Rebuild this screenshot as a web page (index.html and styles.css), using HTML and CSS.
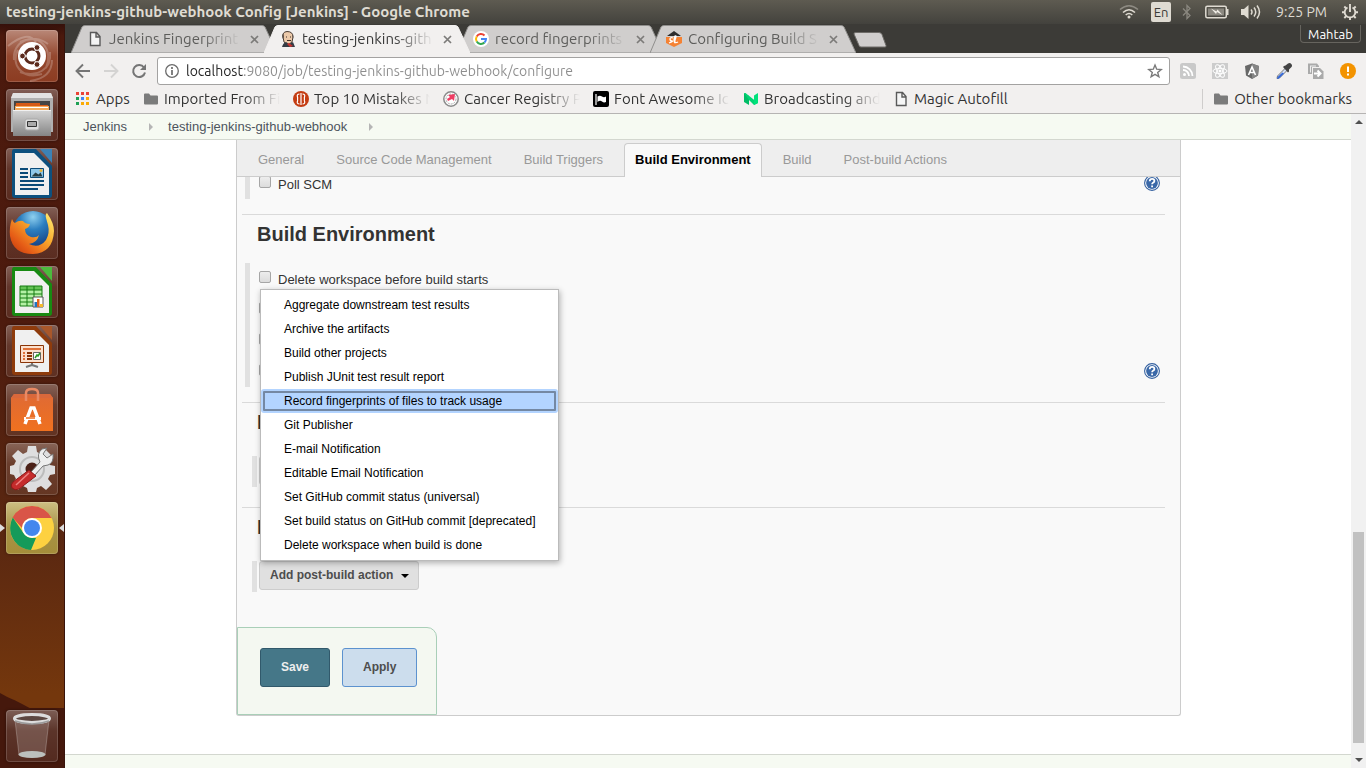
FILE: index.html
```html
<!DOCTYPE html>
<html lang="en">
<head>
<meta charset="utf-8">
<title>testing-jenkins-github-webhook Config [Jenkins]</title>
<link rel="stylesheet" href="styles.css">
</head>
<body>
<header class="topbar">
  <div class="topbar-title">testing-jenkins-github-webhook Config [Jenkins] - Google Chrome</div>
  <div class="indicators">
    <svg class="ind-wifi" width="20" height="16" viewBox="0 0 20 16" fill="none" stroke-width="1.6"><path d="M1 5.500Q10-2 19 5.500" stroke="#8d8a82"/><path d="M4 8.500Q10 3 16 8.500M6.700 11Q10 8 13.300 11" stroke="#dfdbd2"/><circle cx="10" cy="13" r="1.500" fill="#dfdbd2"/></svg>
    <span class="ind-lang">En</span>
    <svg class="ind-bt" width="10" height="16" viewBox="0 0 10 16" fill="none" stroke="#8b8880" stroke-width="1.300"><path d="M1 4.500l7 7L5 14.500v-13L8 4.500l-7 7"/></svg>
    <svg class="ind-battery" width="24" height="14" viewBox="0 0 24 14"><rect x=".8" y="1.300" width="20.500" height="11.400" rx="1.500" fill="none" stroke="#dfdbd2" stroke-width="1.500"/><path d="M3 3.500h16v7H3z" fill="#8b8880"/><path d="M22 4h1.500v6H22z" fill="#dfdbd2"/><path d="M6 3.500l5.500 3 1-2 5 5.500-5.500-3-1 2z" fill="#f0ede5"/></svg>
    <svg class="ind-sound" width="20" height="16" viewBox="0 0 20 16"><path d="M0 5h3l4.500-4v14L3 11H0z" fill="#dfdbd2"/><path d="M10 5.500q2 2.500 0 5M13 3.500q3.500 4.500 0 9M16 1.500q5 6.500 0 13" fill="none" stroke="#dfdbd2" stroke-width="1.500"/></svg>
    <span class="ind-time">9:25 PM</span>
    <svg width="16" height="16" viewBox="0 0 16 16" fill="none" stroke="#dfdbd2"><path d="M5.500 3.500a5.300 5.300 0 1 0 5 0" stroke-width="1.800"/><path d="M8 0v8M0 8.300h3M13 8.300h3M2.300 14l2-2M13.700 14l-2-2M2.300 2.500l2 2M13.700 2.500l-2 2M8 13v3" stroke-width="1.900"/></svg>
  </div>
</header>

<div class="desktop">
  <nav class="launcher" aria-label="Launcher">
    <svg class="launcher-hill" viewBox="0 0 65 78" preserveAspectRatio="none"><path d="M0 3Q7 7 12 9T30 18H65V78H0z" fill="#45180c"/></svg>
    <button class="tile tile-dash" aria-label="Dash">
      <svg viewBox="0 0 52 52"><g fill="none" stroke="#fff" stroke-opacity=".22" stroke-width="2"><path d="M8 30C6 12 26 2 42 14M14 12C34 2 48 20 40 38M44 22c2 18-14 26-30 20M36 44C16 50 4 34 12 20M2 16Q22 0 30 12M24 51q22-3 22-21"/></g><circle cx="26" cy="26" r="14" fill="#fff"/><circle cx="26" cy="26" r="7" fill="none" stroke="#5b2a1c" stroke-width="3"/><g stroke="#fff"><path d="M26 26L15 26M26 26l6-10M26 26l6 10"/><g fill="#5b2a1c"><circle cx="16.500" cy="26" r="2.900"/><circle cx="31" cy="17.500" r="2.900"/><circle cx="31" cy="34.500" r="2.900"/></g></g><circle cx="26" cy="26" r="4.800" fill="#fff"/></svg>
    </button>
    <button class="tile" aria-label="Files">
      <svg viewBox="0 0 52 52"><defs><linearGradient id="steel" x2="0" y2="1"><stop stop-color="#d4d4d4"/><stop offset="1" stop-color="#858585"/></linearGradient></defs><path d="M7 4h38l2 5v34H5V9z" fill="#b0b0b0"/><path d="M7 4h38l2 5H5z" fill="#e2e2e2"/><path d="M8 12h36v12H8z" fill="#454545"/><path d="M10 14h24v2h8v6H9z" fill="#d65a16"/><path d="M9 17h34v5H9z" fill="#f5ab5b"/><path d="M10 18.500h32" stroke="#fff"/><path d="M7 21h38v26H7z" fill="url(#steel)"/><path d="M7 21.500h38" stroke="#f1f1f1"/><rect x="19" y="30" width="14" height="11" rx="2" fill="#ddd" stroke="#a9a9a9"/><path d="M21.500 32.500h9v5h-9z" fill="#aaa" stroke="#333"/></svg>
    </button>
    <button class="tile" aria-label="Writer">
      <svg viewBox="0 0 52 52"><path d="M8 1h22l16 17v29q0 3-3 3H9q-3 0-3-3V4q0-3 2-3z" fill="#0d507e"/><path d="M34 1h12v14z" fill="#3c82b5"/><path d="M9 5h19l15 15v27H9z" fill="#f0f0f0"/><g stroke="#0b4b78" stroke-width="2"><path d="M14 21h8M14 25h8M14 29h8M14 33h24M14 37h24M14 41h18"/></g><path d="M24.500 20.500h13v9h-13z" fill="#8fc7e8" stroke="#0b4b78"/><path d="M25.500 28.500l4-4 3 2 2-2 2 4z" fill="#283c40"/><circle cx="35" cy="22.500" r="1.500" fill="#e9b43a"/></svg>
    </button>
    <button class="tile" aria-label="Firefox">
      <svg viewBox="0 0 52 52"><defs><radialGradient id="globe" cx=".5" cy=".15" r=".8"><stop stop-color="#8fd0ef"/><stop offset=".4" stop-color="#2c7fc0"/><stop offset="1" stop-color="#123a7c"/></radialGradient><linearGradient id="fox" x1="1" y1="0" x2="0" y2="1"><stop stop-color="#fff27a"/><stop offset=".4" stop-color="#f9a92c"/><stop offset=".75" stop-color="#e55b16"/><stop offset="1" stop-color="#b9330c"/></linearGradient></defs><circle cx="27" cy="24" r="20" fill="url(#globe)"/><path d="M6 12q1 3 3 4 4-3 8-2 2 3 7 3-1 4-5 5 0 6 6 8 6 1 8-2-2 8-10 9 10 5 17-4 4-7 2-15l-2-7q-1-4 1-5 7 10 7 18Q47 46 27 47 7 47 4 29 3 20 6 12z" fill="url(#fox)"/></svg>
    </button>
    <button class="tile" aria-label="Calc">
      <svg viewBox="0 0 52 52"><path d="M8 1h22l16 17v29q0 3-3 3H9q-3 0-3-3V4q0-3 2-3z" fill="#188a12"/><path d="M34 1h12v14z" fill="#4cba3d"/><path d="M9 5h19l15 15v27H9z" fill="#f0f0f0"/><path d="M14 20h22v20H14z" fill="#b4f0a5"/><path d="M14 20h22v4H14z" fill="#64c355"/><path d="M14 20h22v20H14zM14 24h22M14 28h22M14 32h22M14 36h22M21 20v20M28 20v20" fill="none" stroke="#157d10"/><path d="M27 31h10v10H27z" fill="#fff" stroke="#555"/><path d="M28.500 36h2.500v5h-2.500z" fill="#2374c2"/><path d="M31 33h2.500v8H31z" fill="#e8641b"/><path d="M34 38h3v3h-3z" fill="#f3b92c"/></svg>
    </button>
    <button class="tile" aria-label="Impress">
      <svg viewBox="0 0 52 52"><path d="M8 1h22l16 17v29q0 3-3 3H9q-3 0-3-3V4q0-3 2-3z" fill="#8e3b0c"/><path d="M34 1h12v14z" fill="#a9572a"/><path d="M9 5h19l15 15v27H9z" fill="#f0f0f0"/><path d="M14.500 20.500h23v17h-23z" fill="#fbe0cd" stroke="#8a3407"/><path d="M17 24h18" stroke="#df7139" stroke-width="2"/><path d="M17 28h2M17 31h2M17 34h2" stroke="#df7139" stroke-width="2"/><path d="M21 28h5M21 31h5M21 34h5" stroke="#8a3407" stroke-width="2"/><path d="M27.500 27.500h7v7h-7z" fill="#fff" stroke="#666"/><path d="M29 33l2-3 1 1 2-3" fill="none" stroke="#2b9a25" stroke-width="1.500"/><path d="M26 38v2l-6 2M26 40l6 2" stroke="#777" stroke-width="2" fill="none"/></svg>
    </button>
    <button class="tile" aria-label="Software">
      <svg viewBox="0 0 52 52"><defs><linearGradient id="bag" x2="0" y2="1"><stop stop-color="#df6a35"/><stop offset="1" stop-color="#f0711f"/></linearGradient></defs><path d="M8 10h36l3 4v33H5V14z" fill="url(#bag)"/><path d="M8 10h36l3 4H5z" fill="#d9683b"/><path d="M20 17V9q0-4 6-4t6 4v8" fill="none" stroke="#e98a64" stroke-width="2.500"/><path d="M19 40l6-16h3l6 16" fill="none" stroke="#fff" stroke-width="3.500"/><path d="M18 33h17v3H18z" fill="#fff"/><path d="M20 34h9" stroke="#ee6e22" stroke-width="1.500"/></svg>
    </button>
    <button class="tile" aria-label="System Settings">
      <svg viewBox="0 0 52 52"><path d="M22 3h8l1 6 4 2 5-4 6 6-4 5 2 4 5 1v8l-5 1-2 4 4 5-6 6-5-4-4 2-1 4h-8l-1-4-4-2-5 4-6-6 4-5-2-4-4-1v-8l4-1 2-4-4-5 6-6 5 4 4-2z" fill="#dededf"/><circle cx="26" cy="26" r="12" fill="none" stroke="#bcbcbc" stroke-width="2"/><circle cx="26" cy="26" r="6.500" fill="#4b2118"/><path d="M25 29L34 19q-4-8 2-13l5-1-4 6 4 4 6-4q1 9-5 11l-5 1-9 10z" fill="#eee" stroke="#777"/><path d="M23 27l7 6-17 13q-4 2-7-1-2-3 1-6z" fill="#c52c2c" stroke="#8e1818"/><path d="M23 30L10 42" stroke="#ee8383" stroke-width="1.500"/></svg>
    </button>
    <button class="tile tile-chrome" aria-label="Google Chrome">
      <svg viewBox="0 0 52 52"><circle cx="26" cy="26" r="22" fill="#fdd140"/><path d="M26 4a22 22 0 0 1 19.700 12H26A10 10 0 0 0 16 26L6.500 15.500A22 22 0 0 1 26 4z" fill="#d95548"/><path d="M6.800 15.500L17.500 31q3 5 9.500 5h3l-5 12A22 22 0 0 1 6.800 15.500z" fill="#159a5a"/><circle cx="26" cy="26" r="10" fill="#fff"/><circle cx="26" cy="26" r="8" fill="#4487ee"/></svg>
      <span class="pip pip-left"></span><span class="pip pip-right"></span>
    </button>
    <button class="tile tile-trash" aria-label="Trash">
      <svg viewBox="0 0 52 52"><path d="M9 9h34l-4 36q-13 5-26 0z" fill="#fff" fill-opacity=".16"/><path d="M9 10l4 35M43 10l-4 35" stroke="#fff" stroke-opacity=".25"/><ellipse cx="26" cy="8.500" rx="17.500" ry="4" fill="#5c4741" stroke="#dcdcdc" stroke-width="3"/><path d="M9 11q17 6 34 0" fill="none" stroke="#9b9b9b" stroke-width="1.500"/><ellipse cx="26" cy="44.500" rx="13.500" ry="3.500" fill="#bcc0bd"/></svg>
    </button>
  </nav>

  <div class="browser">
    <div class="tabstrip">
      <div class="tab">
        <svg class="tab-shape" viewBox="0 0 206 28"><path d="M0 28L11 2Q12 .5 14 .5H191Q193 .5 194 2L206 28z"/></svg>
        <svg class="ico" viewBox="0 0 16 16"><path d="M3.500 1.500h6l3.500 4v9H3.500zM9 1.500V6h4" fill="#f4f4f4" stroke="#5a5a5a" stroke-width="1.400"/></svg>
        <span class="tab-text">Jenkins Fingerprint</span>
        <button class="tab-close" aria-label="Close tab"><svg viewBox="0 0 9 9"><path d="M1 1l7 7M8 1L1 8"/></svg></button>
      </div>
      <div class="tab tab-active">
        <svg class="tab-shape" viewBox="0 0 206 28"><path d="M0 28L11 2Q12 .5 14 .5H191Q193 .5 194 2L206 28z"/></svg>
        <svg class="ico" viewBox="0 0 16 16"><path d="M3 6Q2 1 7 .500q6 0 6 5.500l-1 5-4 3-4-3z" fill="#ecc9a9" stroke="#4a3c33"/><path d="M3 8Q1 4 3.500 2.500L4 6zM12 3q2 1 1 5z" fill="#5d5149"/><path d="M2 16q1-4 4-5l3 2 4-2 2 5z" fill="#343b44"/><path d="M7 13l2-1 4 3-3 1z" fill="#c8322e"/><path d="M6 6h1M10 6h1M7 9.500h4" stroke="#3f3029"/></svg>
        <span class="tab-text">testing-jenkins-gith</span>
        <button class="tab-close" aria-label="Close tab"><svg viewBox="0 0 9 9"><path d="M1 1l7 7M8 1L1 8"/></svg></button>
      </div>
      <div class="tab">
        <svg class="tab-shape" viewBox="0 0 206 28"><path d="M0 28L11 2Q12 .5 14 .5H191Q193 .5 194 2L206 28z"/></svg>
        <svg class="ico" viewBox="0 0 16 16"><circle cx="8" cy="8" r="8" fill="#fff"/><g fill="none" stroke-width="2"><path d="M11.500 4.500A5 5 0 0 0 3.700 5.500" stroke="#ea4335"/><path d="M3.700 5.500a5 5 0 0 0 0 5" stroke="#fbbc05"/><path d="M3.700 10.500a5 5 0 0 0 7.800 1" stroke="#34a853"/><path d="M11.500 11.500A5 5 0 0 0 13 8H8" stroke="#4285f4"/></g></svg>
        <span class="tab-text">record fingerprints</span>
        <button class="tab-close" aria-label="Close tab"><svg viewBox="0 0 9 9"><path d="M1 1l7 7M8 1L1 8"/></svg></button>
      </div>
      <div class="tab">
        <svg class="tab-shape" viewBox="0 0 206 28"><path d="M0 28L11 2Q12 .5 14 .5H191Q193 .5 194 2L206 28z"/></svg>
        <svg class="ico" viewBox="0 0 16 16"><path d="M1 5l7-5 7 5z" fill="#2d2d2d"/><path d="M0 6h16v6l-8 4-8-4z" fill="#f58233"/><path d="M7 7q-3-1-3 1t2 2-3 2M9 12q-2-2 0-7 2-1 0 4-1 4 3 2" fill="none" stroke="#fff" stroke-width="1.300"/></svg>
        <span class="tab-text">Configuring Build S</span>
        <button class="tab-close" aria-label="Close tab"><svg viewBox="0 0 9 9"><path d="M1 1l7 7M8 1L1 8"/></svg></button>
      </div>
      <button class="new-tab" aria-label="New tab"><svg viewBox="0 0 34 16"><path d="M3 .5h23q2 0 3 2l4 11q.5 1.500-1 1.500H8q-1.500 0-2-1.500L1 2Q.5.500 3 .500z" fill="#d0cecd" stroke="#6e6c68"/></svg></button>
      <button class="profile">Mahtab</button>
    </div>

    <div class="toolbar">
      <button class="nav-btn" aria-label="Back"><svg class="ico" viewBox="0 0 16 16" fill="none" stroke="#757575" stroke-width="1.900"><path d="M15 8H2M8 1.500L1.500 8 8 14.500"/></svg></button>
      <button class="nav-btn" aria-label="Forward"><svg class="ico" viewBox="0 0 16 16" fill="none" stroke="#d4d3d2" stroke-width="1.900"><path d="M1 8h13M8 1.500L14.500 8 8 14.500"/></svg></button>
      <button class="nav-btn" aria-label="Reload"><svg class="ico" viewBox="0 0 16 16"><path d="M13 4.500A6 6 0 1 0 14 9.500" fill="none" stroke="#757575" stroke-width="2"/><path d="M15 1v6H9z" fill="#757575"/></svg></button>
      <div class="omnibox">
        <svg class="ico" viewBox="0 0 16 16" fill="none" stroke="#6b6b6b"><circle cx="8" cy="8" r="6.300" stroke-width="1.300"/><path d="M8 7v5M8 4v2" stroke-width="1.700"/></svg>
        <input class="url" type="text" aria-label="Address" value="localhost:9080/job/testing-jenkins-github-webhook/configure">
        <svg class="ico" viewBox="0 0 16 16"><path d="M8 2l1.700 4.200 4.500.3-3.500 2.900 1.200 4.400L8 11.400l-3.900 2.400 1.200-4.400-3.500-2.900 4.500-.3z" fill="none" stroke="#7a7a7a" stroke-width="1.400"/></svg>
      </div>
      <div class="extensions">
        <svg class="ico" viewBox="0 0 16 16"><rect width="16" height="16" rx="2.500" fill="#c9c9c9"/><circle cx="4.500" cy="11.500" r="1.500" fill="#fff"/><path d="M3 7a6 6 0 0 1 6 6M3 3.500A9.500 9.500 0 0 1 12.500 13" fill="none" stroke="#fff" stroke-width="1.800"/></svg>
        <svg class="ico" viewBox="0 0 16 16"><path d="M0 0h16v16H0z" fill="#ccc"/><g fill="none" stroke="#fff"><ellipse cx="8" cy="8" rx="7" ry="2.700"/><ellipse cx="8" cy="8" rx="7" ry="2.700" transform="rotate(60 8 8)"/><ellipse cx="8" cy="8" rx="7" ry="2.700" transform="rotate(120 8 8)"/></g><circle cx="8" cy="8" r="1.500" fill="#fff"/></svg>
        <svg class="ico" viewBox="0 0 16 16"><path d="M8 .5l7 2.500-1 9.500-6 3.500-6-3.500L1 3z" fill="#686868"/><path d="M8 .5l7 2.500-1 9.500-6 3.500z" fill="#858585"/><path d="M4.500 12L8 4l3.500 8M6 9.500h4" fill="none" stroke="#fff" stroke-width="1.600"/></svg>
        <svg class="ico" viewBox="0 0 16 16"><path d="M9.500 5l2 2-8 8-2.500.5.500-2.500z" fill="#d3dff5" stroke="#777"/><path d="M6.500 9.500l1.500 1-5 5-2 .5.500-2z" fill="#3568d8"/><path d="M8 3l1.500-.5L12 .5q2-1 3.300.500T15.500 4L13 6.500v2l-1 1L7 4z" fill="#444"/></svg>
        <svg class="ico" viewBox="0 0 16 16"><path d="M0 .500h9L11 3v1H4v7H0z" fill="#aaa"/><path d="M2 2.500h6v1H3v6H2z" fill="#eee"/><path d="M5 5h7l3.500 3.500V16H5z" fill="#aaa"/><path d="M6 10.500h6M9.500 7.500l3 3-3 3" fill="none" stroke="#fff" stroke-width="2"/></svg>
        <svg class="ico" viewBox="0 0 16 16"><circle cx="8" cy="8" r="8" fill="#f39300"/><path d="M8 3.500v5.500M8 10.500v2" stroke="#fff" stroke-width="2"/></svg>
      </div>
    </div>

    <div class="bookmarks">
      <a class="bm bm-apps" href="#"><svg class="ico" viewBox="0 0 16 16"><path d="M1 1h3v3H1zM6 1h3v3H6zM11 1h3v3h-3z" fill="#ea4335"/><path d="M1 6h3v3H1zM1 11h3v3H1z" fill="#1fa055"/><path d="M6 6h3v3H6z" fill="#4285f4"/><path d="M11 6h3v3h-3zM6 11h3v3H6zM11 11h3v3h-3z" fill="#fbab05"/></svg><span>Apps</span></a>
      <a class="bm bm-long" href="#"><svg class="ico" viewBox="0 0 16 16"><path d="M1 3.500Q1 2.500 2 2.500h4l1.500 2H14q1 0 1 1v7q0 1-1 1H2q-1 0-1-1z" fill="#7b7b7b"/></svg><span>Imported From Fi</span></a>
      <a class="bm bm-long" href="#"><svg class="ico" viewBox="0 0 16 16"><circle cx="8" cy="8" r="8" fill="#c43c12"/><path d="M6.500 3Q3.500 3 4.500 6q.5 2-.5 2 1 0 .5 2-1 3 2 3M9.500 3q3 0 2 3-.5 2 .5 2-1 0-.5 2 1 3-2 3M8 2v12" fill="none" stroke="#fff" stroke-width="1.200"/></svg><span>Top 10 Mistakes N</span></a>
      <a class="bm bm-long" href="#"><svg class="ico" viewBox="0 0 16 16"><circle cx="8" cy="8" r="7.200" fill="#fff" stroke="#8a8a8a" stroke-width="1.500"/><circle cx="8" cy="8" r="5" fill="none" stroke="#aaa" stroke-dasharray="2 1"/><path d="M5 4l7-1-1 7-2-2-4 2-1-2 3-2z" fill="#ef3c63"/></svg><span>Cancer Registry P</span></a>
      <a class="bm bm-long" href="#"><svg class="ico" viewBox="0 0 16 16"><rect width="16" height="16" rx="2" fill="#000"/><path d="M3 3v11" stroke="#fff" stroke-width="1.200"/><path d="M4.500 5.500q2.500-1.500 4.500 0t4 0V11q-2 1-4-.5t-4.500.5z" fill="#fff"/></svg><span>Font Awesome Ic</span></a>
      <a class="bm bm-long" href="#"><svg class="ico" viewBox="0 0 16 16"><path d="M1 2l5 3v9l-5-3z" fill="#00bd66"/><path d="M1 2h1.500L15 12l-4 2L6 9z" fill="#00d573"/><path d="M11 4.500l4-2.500v10l-4 2z" fill="#00e27b"/></svg><span>Broadcasting and</span></a>
      <a class="bm" href="#"><svg class="ico" viewBox="0 0 16 16"><path d="M3.500 1.500h6l3.500 4v9H3.500zM9 1.500V6h4" fill="#f6f6f6" stroke="#5a5a5a" stroke-width="1.400"/></svg><span>Magic Autofill</span></a>
      <a class="bm bm-other" href="#"><svg class="ico" viewBox="0 0 16 16"><path d="M1 3.500Q1 2.500 2 2.500h4l1.500 2H14q1 0 1 1v7q0 1-1 1H2q-1 0-1-1z" fill="#7b7b7b"/></svg><span>Other bookmarks</span></a>
    </div>

    <div class="viewport">
      <div class="page">
        <nav class="breadcrumbs" aria-label="Breadcrumb">
          <a href="#">Jenkins</a><i class="crumb-arrow"></i><a href="#">testing-jenkins-github-webhook</a><i class="crumb-arrow"></i>
        </nav>
        <main class="main">
          <form class="config">
            <div class="config-tabs">
              <a href="#">General</a><a href="#">Source Code Management</a><a href="#">Build Triggers</a><a class="current" href="#">Build Environment</a><a href="#">Build</a><a href="#">Post-build Actions</a>
            </div>
            <div class="scroll-area">
              <div class="sections">
                <div class="options">
                  <div class="option"><input type="checkbox" id="poll"><label for="poll">Poll SCM</label><button type="button" class="help" aria-label="Help"><svg class="ico" viewBox="0 0 16 16"><circle cx="8" cy="8" r="7.400" fill="#fff" stroke="#34609f" stroke-width="1.100"/><circle cx="8" cy="8" r="5.900" fill="#3a68a8"/><path d="M5.700 6.200Q5.800 3.900 8.100 3.900t2.300 2Q10.400 7 9 7.800q-.9.500-.9 1.500M8.100 10.400v1.900" fill="none" stroke="#fff" stroke-width="1.800"/></svg></button></div>
                </div>
                <section class="section">
                  <h2>Build Environment</h2>
                  <div class="options">
                    <div class="option"><input type="checkbox" id="wipe"><label for="wipe">Delete workspace before build starts</label></div>
                    <div class="option"><input type="checkbox" aria-label="Abort the build"></div>
                    <div class="option"><input type="checkbox" aria-label="Add timestamps"></div>
                    <div class="option"><input type="checkbox" aria-label="Use secrets"><button type="button" class="help" aria-label="Help"><svg class="ico" viewBox="0 0 16 16"><circle cx="8" cy="8" r="7.400" fill="#fff" stroke="#34609f" stroke-width="1.100"/><circle cx="8" cy="8" r="5.900" fill="#3a68a8"/><path d="M5.700 6.200Q5.800 3.900 8.100 3.900t2.300 2Q10.400 7 9 7.800q-.9.500-.9 1.500M8.100 10.400v1.900" fill="none" stroke="#fff" stroke-width="1.800"/></svg></button></div>
                  </div>
                </section>
                <section class="section section-steps">
                  <h2>Build</h2>
                  <div class="steps"><button type="button" class="add-btn" aria-label="Add build step"><i class="caret"></i></button></div>
                </section>
                <section class="section section-steps">
                  <h2>Post-build Actions</h2>
                  <div class="steps">
                    <div class="dropdown">
                      <button type="button" class="add-btn" aria-haspopup="menu" aria-expanded="true">Add post-build action<i class="caret"></i></button>
                      <ul class="menu" role="menu">
                        <li role="menuitem">Aggregate downstream test results</li>
                        <li role="menuitem">Archive the artifacts</li>
                        <li role="menuitem">Build other projects</li>
                        <li role="menuitem">Publish JUnit test result report</li>
                        <li role="menuitem" class="selected">Record fingerprints of files to track usage</li>
                        <li role="menuitem">Git Publisher</li>
                        <li role="menuitem">E-mail Notification</li>
                        <li role="menuitem">Editable Email Notification</li>
                        <li role="menuitem">Set GitHub commit status (universal)</li>
                        <li role="menuitem">Set build status on GitHub commit [deprecated]</li>
                        <li role="menuitem">Delete workspace when build is done</li>
                      </ul>
                    </div>
                  </div>
                </section>
              </div>
              <div class="actions">
                <button type="submit" class="btn btn-save">Save</button>
                <button type="button" class="btn btn-apply">Apply</button>
              </div>
            </div>
          </form>
        </main>
        <footer class="footer"></footer>
      </div>
      <div class="scrollbar"><i class="arrow-up"></i><div class="thumb"></div><i class="arrow-down"></i></div>
    </div>
  </div>
</div>
</body>
</html>
```
FILE: styles.css
```css
* { box-sizing: border-box; }
body {
  margin: 0;
  min-height: 100vh;
  display: flex;
  flex-direction: column;
  background: #fff;
  font: 13px/16px "Liberation Sans", Arial, sans-serif;
  color: #333;
}
button { border: 0; padding: 0; background: none; font: inherit; color: inherit; }
a { color: inherit; text-decoration: none; }
svg { display: block; flex: none; }
.ico { width: 16px; height: 16px; }

/* System bar */
.topbar {
  display: flex;
  justify-content: space-between;
  align-items: center;
  height: 24px;
  padding: 0 8px 0 6px;
  background: linear-gradient(#5e5b51, #43423d);
  color: #dfdbd2;
  font-family: Ubuntu, "Noto Sans", sans-serif;
  font-size: 14px;
  white-space: nowrap;
}
.topbar-title { font-weight: 700; font-size: 15px; }
.indicators { display: flex; align-items: center; }
.ind-wifi { margin-right: 12px; }
.ind-lang {
  width: 20px;
  margin-right: 11px;
  border-radius: 2px;
  background: #dfdbd2;
  color: #3c3b37;
  font-size: 13px;
  line-height: 20px;
  text-align: center;
}
.ind-bt { margin-right: 13px; }
.ind-battery { margin-right: 12px; }
.ind-sound { margin-right: 15px; }
.ind-time { margin-right: 15px; }

.desktop { flex: 1; display: flex; }

/* Launcher */
.launcher {
  position: relative;
  flex: none;
  width: 65px;
  display: flex;
  flex-direction: column;
  gap: 7px;
  padding: 6px;
  border-right: 1px solid #38130b;
  background: linear-gradient(#35100a 0, #4b190d 12px, #4d1b0e 40%, #5b2811 70%, #74370d 90%);
}
.launcher-hill { position: absolute; left: 0; bottom: 0; width: 100%; height: 78px; }
.tile {
  position: relative;
  width: 52px;
  height: 52px;
  border-radius: 4px;
  background: linear-gradient(rgba(255, 255, 255, .3), rgba(255, 255, 255, .12) 40%, rgba(255, 255, 255, .08));
  box-shadow: inset 0 0 0 1px rgba(255, 255, 255, .16), 0 0 3px rgba(0, 0, 0, .4);
}
.tile svg { width: 52px; height: 52px; }
.tile-dash { background: linear-gradient(#b98878, #94482f 50%, #8c3c22); }
.tile-chrome { background: linear-gradient(#cdbf83, #a89347 50%, #a58d3a); }
.tile-trash { margin-top: auto; }
.pip { position: absolute; top: 22px; border: 4px solid transparent; }
.pip-left { left: -6px; border-left: 5px solid #ddd; border-right: 0; }
.pip-right { right: -6px; border-right: 5px solid #ddd; border-left: 0; }

/* Browser frame */
.browser {
  flex: 1;
  min-width: 0;
  display: flex;
  flex-direction: column;
}
.tabstrip, .toolbar, .bookmarks { font-family: Ubuntu, "Noto Sans", sans-serif; font-size: 15px; line-height: 20px; }
.tabstrip {
  display: flex;
  align-items: flex-start;
  height: 29px;
  padding: 1px 5px 0 6px;
  background: #3c3b37;
}
.tab {
  position: relative;
  width: 206px;
  height: 28px;
  margin-right: -13px;
  display: flex;
  align-items: center;
  padding: 0 18px 0 16px;
  color: #5d5d5b;
}
.tab > * { position: relative; }
.tab > .tab-shape { position: absolute; left: 0; top: 0; width: 206px; height: 28px; fill: #d0cecd; stroke: #8f8e8c; }
.tab-active { z-index: 1; color: #3a3a3a; }
.tab-active > .tab-shape { fill: #f2f0ef; stroke: #f2f0ef; }
.tab-text {
  flex: 1;
  margin: 0 9px 0 6px;
  overflow: hidden;
  white-space: nowrap;
  -webkit-mask-image: linear-gradient(to left, transparent, #000 40px);
  mask-image: linear-gradient(to left, transparent, #000 40px);
}
.tab-close svg { width: 9px; height: 9px; fill: none; stroke: #7c7b79; stroke-width: 1.7; }
.new-tab { margin: 7px 0 0 10px; }
.new-tab svg { width: 34px; height: 16px; }
.profile {
  margin-left: auto;
  width: 61px;
  height: 18px;
  border: 1px solid #66645e;
  border-top: 0;
  border-radius: 0 0 4px 4px;
  color: #fff;
  font-size: 13px;
  line-height: 18px;
}
.toolbar {
  display: flex;
  align-items: center;
  padding: 4px 10px 0;
  background: #f2f0ef;
}
.nav-btn { margin-right: 12px; }
.nav-btn + .nav-btn + .nav-btn { margin-right: 10px; }
.omnibox {
  flex: 1;
  display: flex;
  align-items: center;
  gap: 6px;
  height: 28px;
  margin-right: 10px;
  padding: 0 6px;
  border: 1px solid #a3a2a1;
  border-radius: 3px;
  background: #fff;
}
.url {
  flex: 1;
  min-width: 0;
  height: 24px;
  padding: 0;
  border: 0;
  outline: 0;
  font: inherit;
  font-size: 14px;
  color: transparent;
  background: linear-gradient(to right, #222 58px, #8d8d8d 58px);
  -webkit-background-clip: text;
  background-clip: text;
}
.extensions { display: flex; gap: 16px; }
.bookmarks {
  display: flex;
  align-items: center;
  height: 29px;
  padding: 0 14px 0 10px;
  border-bottom: 1px solid #b6b4b3;
  background: #f2f0ef;
  color: #333;
  white-space: nowrap;
}
.bm { display: flex; align-items: center; gap: 5px; }
.bm-apps { width: 68px; }
.bm-long { width: 137px; margin-right: 13px; }
.bm-long span {
  flex: 1;
  overflow: hidden;
  -webkit-mask-image: linear-gradient(to left, transparent, #000 36px);
  mask-image: linear-gradient(to left, transparent, #000 36px);
}
.bm-other { margin-left: auto; padding-left: 10px; border-left: 1px solid #cfcdcc; }

/* Viewport */
.viewport { flex: 1; display: flex; }
.page { flex: 1; min-width: 0; display: flex; flex-direction: column; background: #fff; }
.breadcrumbs {
  display: flex;
  align-items: center;
  height: 26px;
  padding-left: 18px;
  border-bottom: 1px solid #d3d7cf;
  background: #f6faf2;
  color: #4d545d;
}
.crumb-arrow { margin: 0 15px 0 22px; border: 4px solid transparent; border-left-color: #b5b5b5; border-right: 0; }
.main { padding: 0 170px 38px 171px; }
.config {
  border: 1px solid #ccc;
  border-top: 0;
  border-radius: 0 0 3px 3px;
  background: #f9f9f9;
}
.config-tabs {
  display: flex;
  align-items: flex-end;
  gap: 10px;
  height: 37px;
  padding-left: 10px;
  border-bottom: 1px solid #ccc;
  background: #eee;
  color: #999;
  white-space: nowrap;
}
.config-tabs a {
  height: 34px;
  margin-bottom: -1px;
  padding: 0 10px;
  border: 1px solid transparent;
  border-bottom: 0;
  border-radius: 4px 4px 0 0;
  line-height: 32px;
}
.config-tabs .current { border-color: #ccc; background: #f9f9f9; color: #000; font-weight: 700; }
.scroll-area { overflow: hidden; }
.sections { margin-top: -9px; padding: 0 15px 35px 5px; }
.options { margin-left: 3px; border-left: 5px solid #e1e1e1; }
.option { display: flex; align-items: flex-start; height: 31px; padding: 7px 5px 0 9px; }
.option label { line-height: 20px; }
.option input {
  appearance: none;
  width: 12px;
  height: 12px;
  margin: 1px 7px 0 0;
  border: 1px solid #a6a6a6;
  border-radius: 2px;
  background: linear-gradient(#ededed, #dcdcdc);
}
.help { margin-left: auto; }
.section { margin-top: 15px; border-top: 1px solid #dadada; }
.section h2 { margin: 0 0 10px 15px; color: #333; font-size: 20px; line-height: 38px; }
.section-steps h2 { margin-bottom: 15px; }
.section-steps + .section-steps { margin-top: 20px; }
.steps { height: 31px; margin-left: 10px; padding-left: 2px; border-left: 5px solid #e1e1e1; }
.add-btn {
  display: flex;
  align-items: center;
  gap: 8px;
  height: 29px;
  padding: 0 9px 2px 10px;
  border: 1px solid #ccc;
  border-radius: 3px;
  background: #e0e0e0;
  color: #4d4d4d;
  font-size: 12px;
  font-weight: 700;
}
.caret { margin-top: 2px; border: 4px solid transparent; border-top-color: #000; border-bottom: 0; }
.dropdown { position: relative; width: max-content; }
.menu {
  position: absolute;
  left: 1px;
  bottom: 100%;
  width: 299px;
  margin: 0;
  padding: 3px 0;
  list-style: none;
  border: 1px solid #bbb;
  background: #fff;
  box-shadow: 1px 2px 6px rgba(0, 0, 0, .3);
  color: #000;
  font-size: 12px;
  line-height: 24px;
}
.menu li { padding-left: 23px; }
.menu .selected {
  border-radius: 3px;
  background: #b3d4ff;
  outline: 2px solid #7488a3;
  outline-offset: -4px;
}
.actions {
  display: flex;
  gap: 12px;
  width: max-content;
  height: 88px;
  padding: 20px 19px 0 22px;
  border: 1px solid #a9cfb8;
  border-radius: 0 10px 0 0;
  background: #f4f8f1;
}
.btn { height: 39px; padding: 0 20px 2px; border: 1px solid; border-radius: 3px; font-size: 12px; font-weight: 700; }
.btn-save { border-color: #31596b; background: #457788; color: #eee; }
.btn-apply { border-color: #5c92cf; background: #ccdded; color: #4d4d4d; }
.footer { flex: 1; border-top: 1px solid #d3d7cf; background: #f6faf2; }

.scrollbar {
  width: 15px;
  display: flex;
  flex-direction: column;
  align-items: center;
  justify-content: space-between;
  padding: 6px 0;
  background: #f1f1f1;
}
.arrow-up { margin-bottom: auto; border: 4px solid transparent; border-bottom-color: #505050; border-top: 0; }
.arrow-down { margin-top: 15px; border: 4px solid transparent; border-top-color: #505050; border-bottom: 0; }
.thumb { width: 11px; height: 211px; background: #c1c1c1; }
```
